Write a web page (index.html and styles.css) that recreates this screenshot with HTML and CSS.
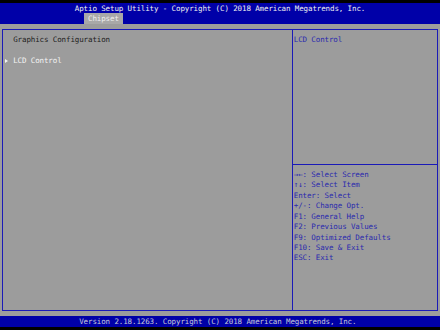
FILE: index.html
```html
<!DOCTYPE html>
<html>
<head>
<meta charset="utf-8">
<link rel="stylesheet" href="styles.css">
</head>
<body>
<div class="screen">
  <header class="header">
    <div class="title">Aptio Setup Utility - Copyright (C) 2018 American Megatrends, Inc.</div>
    <div class="tabs"><div class="tab">Chipset</div></div>
  </header>
  <main class="body">
    <div class="frame">
      <section class="left">
        <div class="line label">  Graphics Configuration</div>
        <div class="line"></div>
        <div class="line item"><span class="arrow"></span> LCD Control</div>
      </section>
      <aside class="right">
        <div class="help-top">
          <div class="line">LCD Control</div>
        </div>
        <div class="help-keys">
          <div class="line">→←: Select Screen</div>
          <div class="line">↑↓: Select Item</div>
          <div class="line">Enter: Select</div>
          <div class="line">+/-: Change Opt.</div>
          <div class="line">F1: General Help</div>
          <div class="line">F2: Previous Values</div>
          <div class="line">F9: Optimized Defaults</div>
          <div class="line">F10: Save &amp; Exit</div>
          <div class="line">ESC: Exit</div>
        </div>
      </aside>
    </div>
  </main>
  <footer class="footer">Version 2.18.1263. Copyright (C) 2018 American Megatrends, Inc.</footer>
</div>
</body>
</html>
```

FILE: styles.css
```css
html, body {
  margin: 0;
  padding: 0;
  background: #000;
}
.screen {
  width: 440px;
  height: 330px;
  padding-top: 2.8px;
  box-sizing: border-box;
  font-family: "DejaVu Sans Mono", "Liberation Mono", monospace;
  font-size: 7.5px;
  letter-spacing: -0.115px;
  line-height: 10.45px;
}
.title, .tab, .line, .footer {
  white-space: pre;
  height: 10.45px;
  box-sizing: border-box;
  padding-top: 2px;
  line-height: 8.45px;
}
.header {
  background: #0000a8;
  height: 20.9px;
}
.title {
  padding-left: 74.8px;
  color: #f0f0f0;
}
.tabs {
  height: 10.45px;
  padding-left: 83.6px;
  display: flex;
}
.tab {
  width: 39.6px;
  padding-left: 4.4px;
  background: #a8a8a8;
  color: #f0f0f0;
}
.body {
  background: #9c9c9c;
  height: 292.6px;
  padding: 5.2px 2.2px 0;
  box-sizing: border-box;
}
.frame {
  height: 282.2px;
  border: 1px solid #1a1ab8;
  box-sizing: border-box;
  display: grid;
  grid-template-columns: 289.4px 1fr;
}
.left {
  border-right: 1px solid #1a1ab8;
  padding: 4.25px 0 0 1.2px;
}
.label {
  color: #1c1c1c;
}
.item {
  color: #f4f4f4;
}
.arrow {
  display: inline-block;
  width: 4.4px;
  height: 8px;
  vertical-align: top;
  position: relative;
}
.arrow::before {
  content: "";
  position: absolute;
  left: 0.6px;
  top: 1.5px;
  border-left: 3px solid #f4f4f4;
  border-top: 2.5px solid transparent;
  border-bottom: 2.5px solid transparent;
}
.right {
  display: flex;
  flex-direction: column;
  color: #2a2aae;
}
.help-top {
  height: 134.85px;
  box-sizing: border-box;
  padding: 4.25px 0 0 1.2px;
  border-bottom: 1px solid #1a1ab8;
}
.help-keys {
  padding: 4.25px 0 0 1.2px;
}
.footer {
  background: #0000a8;
  padding-left: 79.2px;
  color: #c8c8d8;
}
```
